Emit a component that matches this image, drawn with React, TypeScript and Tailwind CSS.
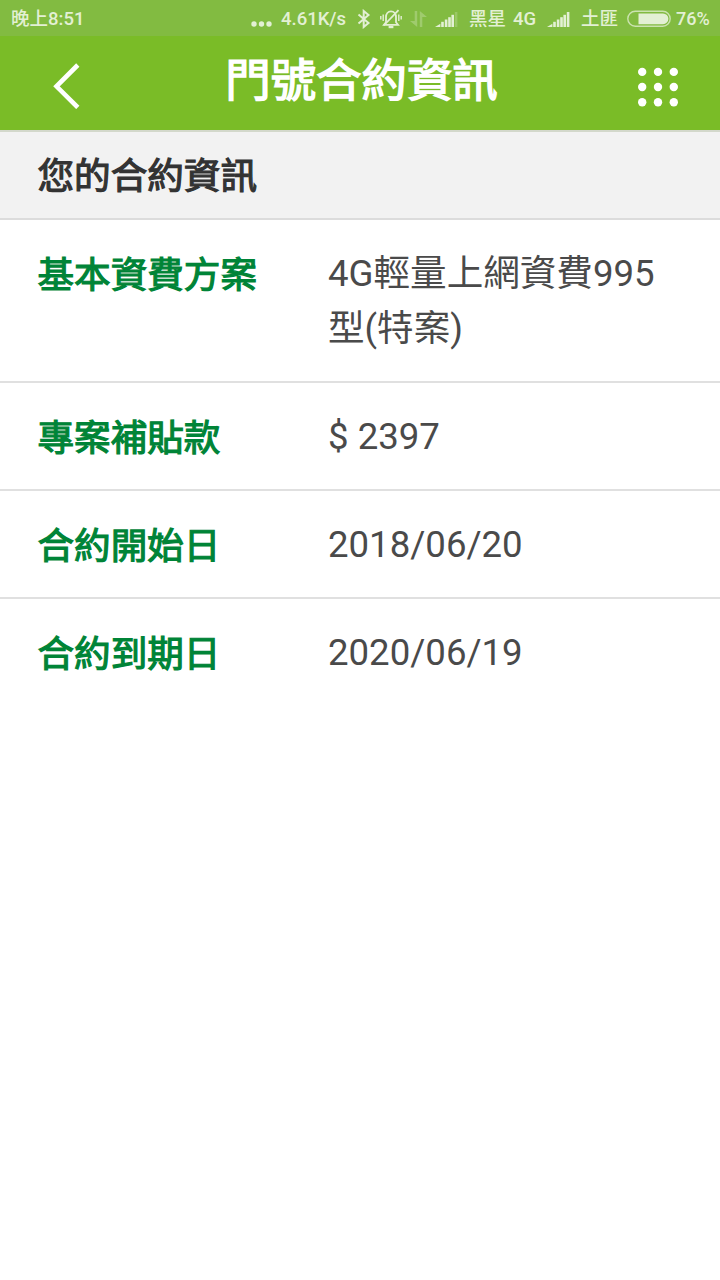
import clsx from "clsx";

const rows = [
  { label: "基本資費方案", value: "4G輕量上網資費995型(特案)" },
  { label: "專案補貼款", value: "$ 2397" },
  { label: "合約開始日", value: "2018/06/20" },
  { label: "合約到期日", value: "2020/06/19" },
];

function Signal({ weak = false, className }: { weak?: boolean; className?: string }) {
  return (
    <svg width="24" height="18" viewBox="0 0 24 18" fill="currentColor" className={className}>
      <path d="M0 17 L5.4 13.8 V17 Z" />
      <rect x="6.2" y="11.8" width="2.6" height="5.2" />
      <rect x="9.8" y="9.5" width="2.6" height="7.5" />
      <rect x="13.2" y="7.2" width="2.6" height="9.8" />
      <rect x="16.4" y="4.8" width="2.6" height="12.2" />
      <rect x="19.8" y="2" width="2.6" height="15" opacity={weak ? 0.25 : 1} />
    </svg>
  );
}

function StatusBar() {
  return (
    <div className="flex h-9 items-center bg-[#82bb41] pt-px pl-[11px] text-[18.5px] leading-[36px] font-medium whitespace-nowrap text-[#e3f0d4]">
      <span className="w-[240px]">晚上8:51</span>
      <svg width="22" height="18" viewBox="0 0 22 18" fill="currentColor">
        <circle cx="3" cy="14" r="2.7" />
        <circle cx="10.5" cy="14" r="2.7" />
        <circle cx="18" cy="14" r="2.7" />
      </svg>
      <span className="ml-2 w-[67px]">4.61K/s</span>
      {/* bluetooth */}
      <svg width="14" height="20" viewBox="0 0 14 20" fill="none" stroke="currentColor" strokeWidth="2" className="ml-[9px]">
        <path d="M1.5 5.5 L11.5 14 L6.7 18 V2 L11.5 6 L1.5 14.5" />
      </svg>
      {/* muted bell */}
      <svg width="22" height="20" viewBox="0 0 22 20" fill="none" stroke="currentColor" strokeWidth="1.8" className="ml-[9px]">
        <path d="M4 15.8 L6 13.3 V8 C6 4.8 8 2.4 11 2.4 C14 2.4 16 4.8 16 8 V13.3 L18 15.8 Z" />
        <path d="M18.5 1.2 L3.8 16.5" />
        <path d="M8.6 18 H13.4" strokeWidth="2.4" />
        <path d="M3.2 5.5 V12 M0.8 7 V10.5 M18.8 5.5 V12 M21.2 7 V10.5" strokeWidth="1.4" />
      </svg>
      {/* data arrows */}
      <svg width="17" height="18" viewBox="0 0 17 18" fill="currentColor" className="ml-2 opacity-30">
        <path d="M4.7 1 H7.2 V17 L0 11 H4.7 Z" />
        <path d="M9.8 17 H12.3 V7 H17 L9.8 1 Z" />
      </svg>
      <Signal weak className="ml-2" />
      <span className="ml-[10px] w-[38px]">黑星</span>
      <span className="ml-[6px] w-[24px]">4G</span>
      <Signal className="ml-[10px]" />
      <span className="ml-[10px] w-[38px]">土匪</span>
      <svg width="44" height="18" viewBox="0 0 44 18" className="ml-2">
        <rect x="0.8" y="1.3" width="42.4" height="15" rx="7.5" fill="none" stroke="currentColor" strokeWidth="1.4" opacity="0.75" />
        <path d="M11.5 3.4 H36 A5.4 5.4 0 0 1 36 14.2 H11.5 Z" fill="currentColor" />
      </svg>
      <span className="ml-[5px] text-[18px]">76%</span>
    </div>
  );
}

function Header() {
  return (
    <header className="flex h-24 items-start justify-between border-b-2 border-[#d3d8cb] bg-[#7abc27] pr-[41px] pl-[53px] text-white">
      <svg width="90" height="46" viewBox="0 0 90 46" fill="none" stroke="currentColor" strokeWidth="4.6" className="mt-[27px] shrink-0">
        <path d="M24.8 2 L3.5 23.3 L24.8 44.5" />
      </svg>
      <h1 className="mt-[13px] text-[45.4px] leading-[66px] font-normal [-webkit-text-stroke:1.5px_currentColor]">
        門號合約資訊
      </h1>
      <svg width="41" height="40" viewBox="0 0 41 40" fill="currentColor" className="mt-[31px] ml-[58px] shrink-0">
        {[4.9, 20, 35.2].map((cy) =>
          [4.2, 20, 35.8].map((cx) => <circle key={`${cx}-${cy}`} cx={cx} cy={cy} r="4.2" />)
        )}
      </svg>
    </header>
  );
}

export default function App() {
  return (
    <div className="h-[1280px] w-[720px] overflow-hidden bg-white font-[Roboto,'Noto_Sans_CJK_TC',sans-serif]">
      <StatusBar />
      <Header />
      <h2 className="h-[88px] border-b-2 border-[#dcdcdc] bg-[#f2f2f2] pt-[17px] pl-[37.5px] text-[36.6px] leading-[56px] font-normal text-[#333] [-webkit-text-stroke:1.2px_currentColor]">
        您的合約資訊
      </h2>
      <dl>
        {rows.map((row, i) => (
          <div
            key={row.label}
            className={clsx(
              "flex items-start pt-[26px] pb-[25px] pl-[37.5px] text-[36.6px] leading-[55px]",
              i < rows.length - 1 && "border-b-2 border-[#e0e0e0]"
            )}
          >
            <dt className="mt-0.5 -mb-0.5 w-[290.5px] shrink-0 font-normal text-[#008437] [-webkit-text-stroke:1.2px_currentColor]">
              {row.label}
            </dt>
            <dd className="w-[340px] break-all text-[#4a4a4a]">{row.value}</dd>
          </div>
        ))}
      </dl>
    </div>
  );
}
